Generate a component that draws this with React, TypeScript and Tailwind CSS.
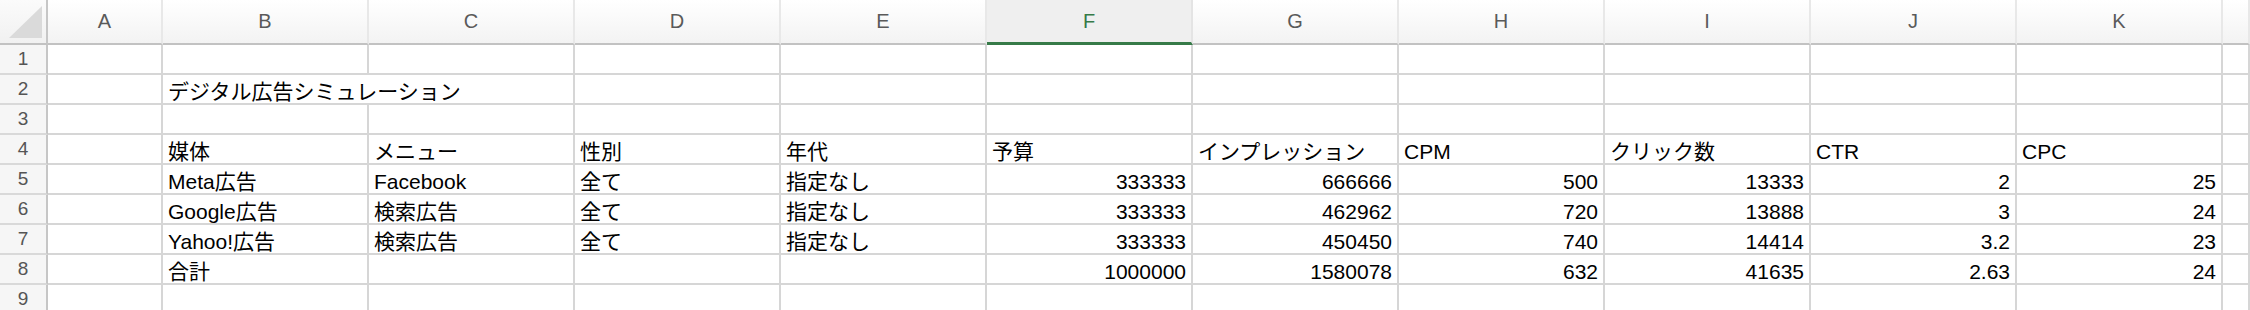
const COLS = ["A", "B", "C", "D", "E", "F", "G", "H", "I", "J", "K", ""];

type Cell = { text: string; num?: boolean };

const t = (text: string): Cell => ({ text });
const n = (text: string): Cell => ({ text, num: true });

const ROWS: (Cell | null)[][] = [
  [],
  [],
  [],
  [null, t("媒体"), t("メニュー"), t("性別"), t("年代"), t("予算"), t("インプレッション"), t("CPM"), t("クリック数"), t("CTR"), t("CPC")],
  [null, t("Meta広告"), t("Facebook"), t("全て"), t("指定なし"), n("333333"), n("666666"), n("500"), n("13333"), n("2"), n("25")],
  [null, t("Google広告"), t("検索広告"), t("全て"), t("指定なし"), n("333333"), n("462962"), n("720"), n("13888"), n("3"), n("24")],
  [null, t("Yahoo!広告"), t("検索広告"), t("全て"), t("指定なし"), n("333333"), n("450450"), n("740"), n("14414"), n("3.2"), n("23")],
  [null, t("合計"), null, null, null, n("1000000"), n("1580078"), n("632"), n("41635"), n("2.63"), n("24")],
  [],
];

const font = "font-['Liberation_Sans','Noto_Sans_CJK_JP',sans-serif]";

function HeaderCell({ label }: { label: string }) {
  const active = label === "F";
  return (
    <div
      className={
        active
          ? "flex items-center justify-center border-b-[3px] border-r-2 border-b-[#367a48] border-r-[#e4e4e4] bg-[#efefef] text-[20px] text-[#367a48]"
          : "flex items-center justify-center border-b-2 border-r-2 border-b-[#c2c2c2] border-r-[#e8e8e8] bg-gradient-to-b from-[#ffffff] to-[#f3f3f3] pb-[1px] text-[20px] text-[#5a5a5a]"
      }
    >
      {label}
    </div>
  );
}

function RowHeader({ num }: { num: number }) {
  return (
    <div className="flex items-center justify-center border-b-2 border-r-2 border-b-[#d9d9d9] border-r-[#c6c6c6] bg-[#f6f6f6] pt-[1px] text-[19px] text-[#555555]">
      {num}
    </div>
  );
}

function DataCell({ cell, span }: { cell: Cell | null; span?: boolean }) {
  return (
    <div
      className={
        "flex items-end overflow-visible whitespace-nowrap border-b-2 border-r-2 border-[#d6d6d6] bg-white px-[5px] pb-[1px] text-[21px] leading-none text-black " +
        (cell?.num ? "justify-end " : "justify-start ") +
        (span ? "col-span-2" : "")
      }
    >
      {cell?.text ?? ""}
    </div>
  );
}

export default function App() {
  return (
    <div className={`h-[310px] w-[2250px] overflow-hidden bg-white ${font}`}>
      <div className="grid grid-cols-[48px_115px_repeat(10,206px)_1fr] grid-rows-[45px_repeat(9,30px)]">
        <div className="flex border-b-2 border-r-2 border-b-[#c2c2c2] border-r-[#c6c6c6] bg-gradient-to-b from-[#fbfbfb] to-[#f1f1f1]">
          <svg width="46" height="43" viewBox="0 0 46 43">
            <polygon points="9,38 42,38 42,6" fill="#dadada" />
          </svg>
        </div>
        {COLS.map((c, i) => (
          <HeaderCell key={i} label={c} />
        ))}

        {ROWS.map((row, r) => (
          <RowCells key={r} row={row} r={r} />
        ))}
      </div>
    </div>
  );
}

function RowCells({ row, r }: { row: (Cell | null)[]; r: number }) {
  const cells = [];
  cells.push(<RowHeader key="h" num={r + 1} />);
  if (r === 1) {
    cells.push(<DataCell key="a" cell={null} />);
    cells.push(<DataCell key="b" cell={t("デジタル広告シミュレーション")} span />);
    for (let c = 3; c < 12; c++) cells.push(<DataCell key={c} cell={null} />);
  } else {
    for (let c = 0; c < 12; c++) cells.push(<DataCell key={c} cell={row[c] ?? null} />);
  }
  return <>{cells}</>;
}
